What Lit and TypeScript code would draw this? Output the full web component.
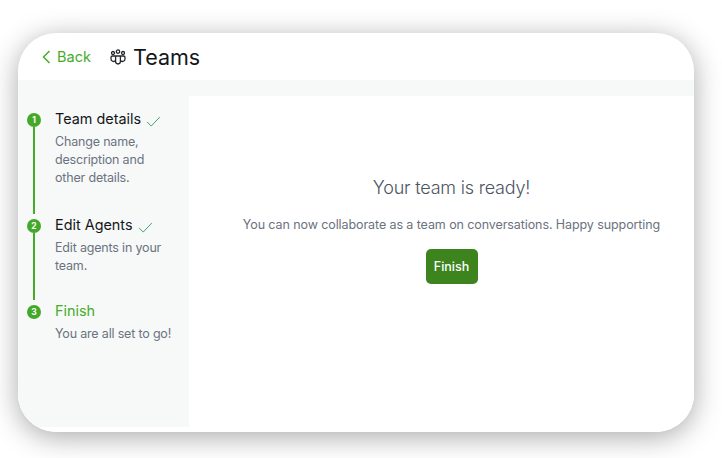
import { LitElement, html, css } from "lit";
import { customElement } from "lit/decorators.js";

const check = html`<svg class="check" viewBox="0 0 16 12" width="15" height="11" fill="none" stroke="#2f9e5f" stroke-width="1"><path d="M1 6.5 L5.5 11 L15 1"/></svg>`;

const steps = [
  { n: 1, title: "Team details", desc: ["Change name,", "description and", "other details."], done: true, h: 106 },
  { n: 2, title: "Edit Agents", desc: ["Edit agents in your", "team."], done: true, h: 86 },
  { n: 3, title: "Finish", desc: ["You are all set to go!"], done: false, h: 60 },
];

@customElement("app-root")
export class AppRoot extends LitElement {
  static styles = css`
    :host { display: block; width: 722px; height: 458px; background: #fff; font-family: "Inter", "Noto Sans", sans-serif; overflow: hidden; }
    .stage { box-sizing: border-box; width: 722px; height: 458px; padding: 33px 28px 26px 18px; }
    .card { width: 676px; height: 399px; border-radius: 38px; background: #fff; overflow: hidden; display: flex; flex-direction: column; box-shadow: 0 5px 28px rgba(0,0,0,.34); }
    .head { position: relative; height: 47px; flex: none; display: flex; align-items: center; padding-left: 24px; }
    .tick { position: absolute; left: 0; top: 22px; width: 3px; height: 1px; background: #8a8a8a; }
    .back { display: flex; align-items: center; gap: 6px; color: #44ac29; font-size: 14.5px; width: 68px; }
    .icon { margin-right: 7px; }
    h1 { margin: 0; font-size: 21.5px; font-weight: 400; color: #14171a; }
    .body { flex: 1; display: flex; min-height: 0; background: #fff; }
    .side { width: 171px; flex: none; padding: 28px 0 0 9px; margin-bottom: 5px; box-sizing: border-box; background: #f7f9f8; }
    .step { display: flex; gap: 14px; }
    .rail { width: 14px; flex: none; display: flex; flex-direction: column; align-items: center; padding-top: 5px; }
    .dot { width: 14px; height: 14px; flex: none; border-radius: 50%; background: #44a829; color: #fff; font-size: 8.5px; font-weight: 700; display: flex; align-items: center; justify-content: center; }
    .line { width: 2px; flex: 1; background: #44ac29; }
    .title { display: flex; align-items: center; gap: 5px; font-size: 14.4px; line-height: 22px; color: #14171a; }
    .title.cur { color: #44ac29; }
    .check { margin-top: 4px; }
    .desc { margin-top: 3px; font-size: 12.5px; letter-spacing: -0.18px; line-height: 18px; color: #6b7280; white-space: nowrap; }
    .main { flex: 1; display: flex; flex-direction: column; border-top: 16px solid #f7f9f8; background: #fff; align-items: center; padding: 79px 0 0 20px; }
    h2 { margin: 0; font-size: 18px; letter-spacing: -0.2px; line-height: 26px; font-weight: 300; color: #4b5563; }
    p { margin: 15px 0 0; font-size: 12.5px; letter-spacing: -0.09px; line-height: 18px; color: #6b7280; }
    button { all: unset; margin-top: 15px; width: 52px; height: 35px; box-sizing: border-box; text-align: center; line-height: 35px; font-size: 12.5px; font-weight: 500; color: #fff; background: #3d841f; border-radius: 5px; }
  `;
  render() {
    return html`<div class="stage"><div class="card">
      <div class="head">
        <div class="tick"></div>
        <div class="back">
          <svg width="9" height="14" viewBox="0 0 9 14" fill="none" stroke="#44ac29" stroke-width="1.5"><path d="M7.5 1 L1.5 7 L7.5 13"/></svg>
          <span>Back</span>
        </div>
        <svg class="icon" width="16" height="16" viewBox="0 0 16 16" fill="none" stroke="#23272b" stroke-width="1.3">
          <circle cx="8" cy="2.6" r="1.7"/><circle cx="3" cy="4" r="1.5"/><circle cx="13" cy="4" r="1.5"/>
          <path d="M5.6 7 h4.8 v5.6 a2.4 2.4 0 0 1 -4.8 0 z"/>
          <path d="M5 7 H2.5 a1.5 1.5 0 0 0 -1.5 1.5 v1.5 a2.5 2.5 0 0 0 4.2 1.8"/>
          <path d="M11 7 h2.5 a1.5 1.5 0 0 1 1.5 1.5 v1.5 a2.5 2.5 0 0 1 -4.2 1.8"/>
        </svg>
        <h1>Teams</h1>
      </div>
      <div class="body">
        <div class="side">
          ${steps.map((s, i) => html`<div class="step" style="height:${s.h}px">
            <div class="rail"><div class="dot">${s.n}</div>${i < 2 ? html`<div class="line"></div>` : ""}</div>
            <div>
              <div class="title ${s.done ? "" : "cur"}">${s.title}${s.done ? check : ""}</div>
              <div class="desc">${s.desc.map((d) => html`${d}<br />`)}</div>
            </div>
          </div>`)}
        </div>
        <div class="main">
          <h2>Your team is ready!</h2>
          <p>You can now collaborate as a team on conversations. Happy supporting</p>
          <button>Finish</button>
        </div>
      </div>
    </div></div>`;
  }
}
